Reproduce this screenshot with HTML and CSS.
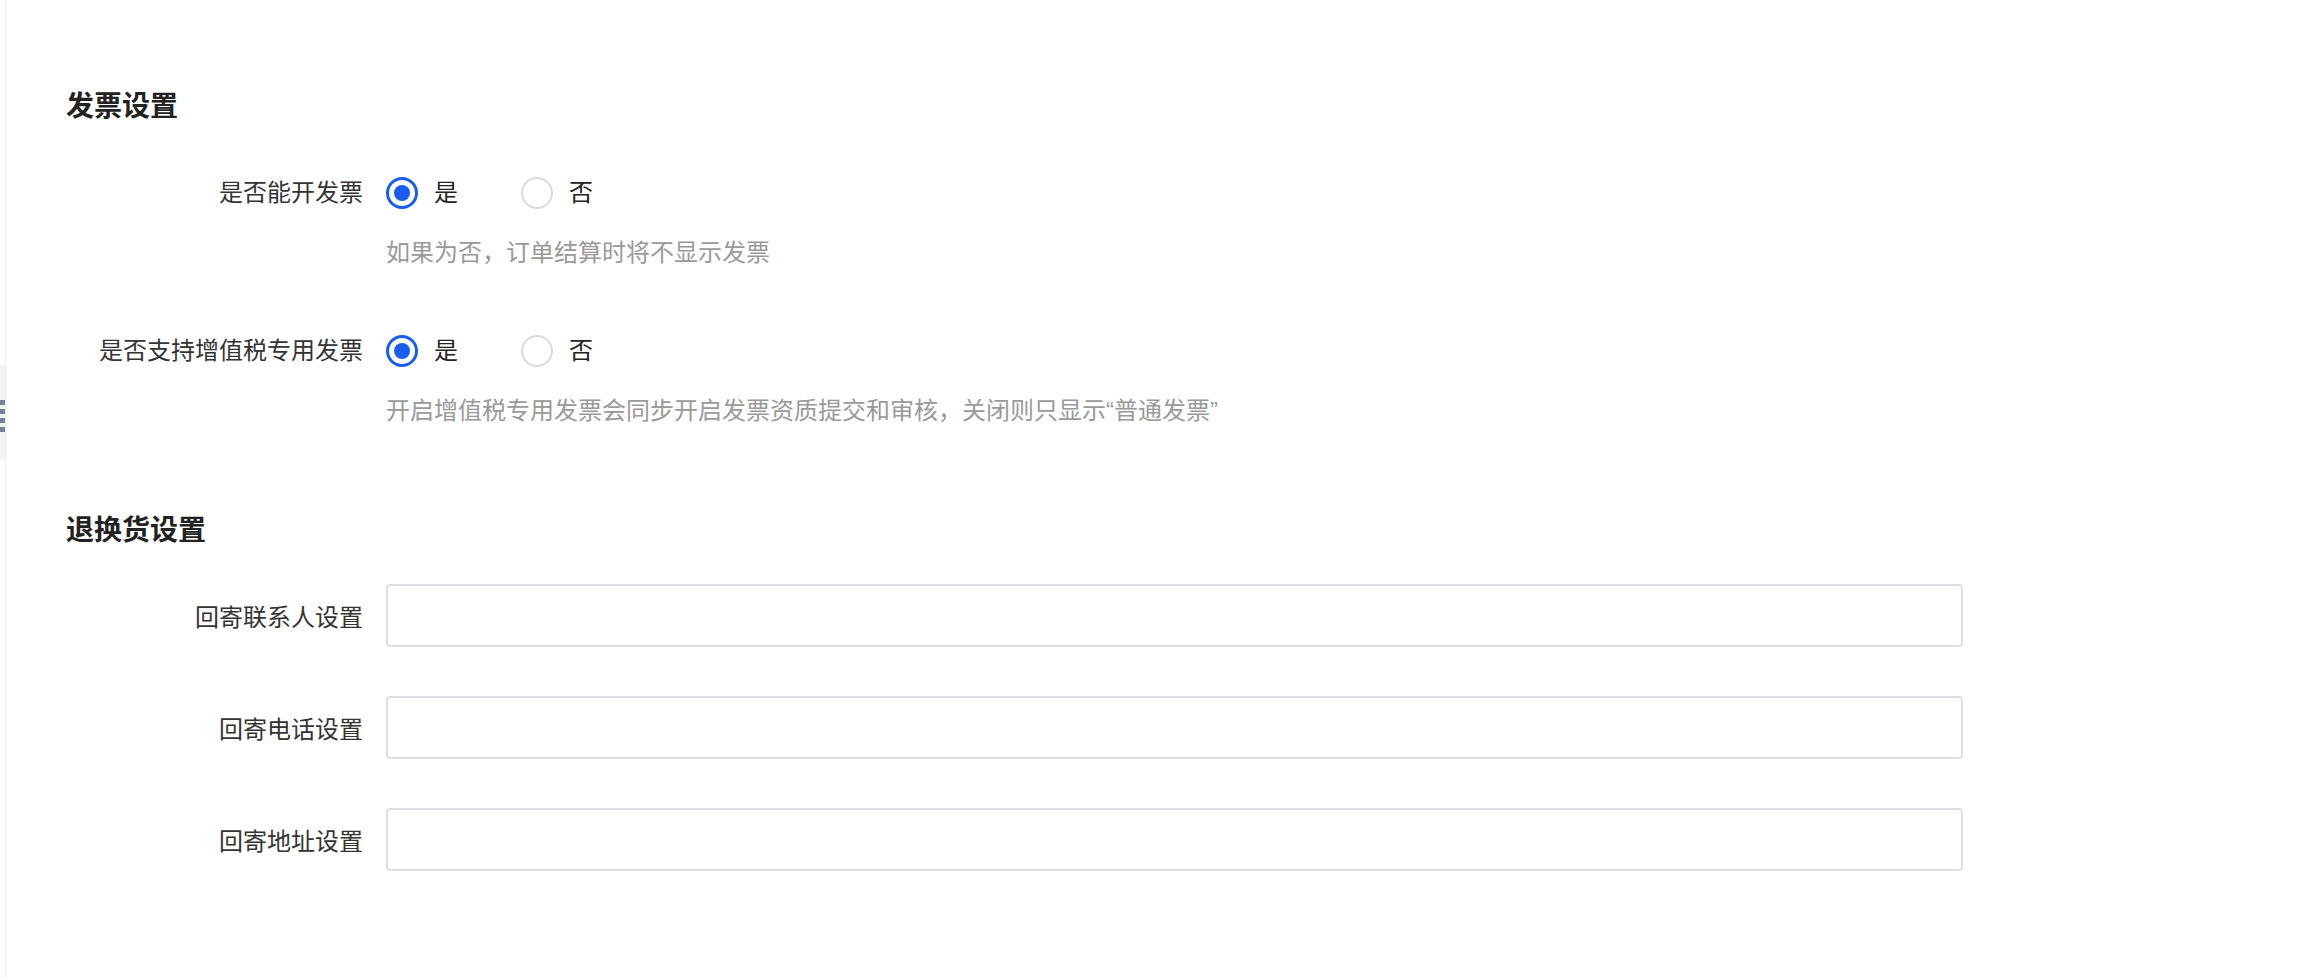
FILE: index.html
```html
<!DOCTYPE html>
<html lang="zh-CN">
<head>
<meta charset="utf-8">
<title>设置</title>
<link rel="stylesheet" href="styles.css">
</head>
<body>
<div class="page">
  <div class="edge">
    <div class="edge-spacer"></div>
    <div class="edge-tab">
      <span class="bar"></span><span class="bar"></span><span class="bar"></span><span class="bar"></span>
    </div>
  </div>
  <div class="content">
    <h2 class="section-title">发票设置</h2>

    <div class="form-row radio-row">
      <div class="label">是否能开发票</div>
      <div class="control">
        <label class="radio checked"><span class="dot"></span><span class="radio-text">是</span></label>
        <label class="radio"><span class="dot"></span><span class="radio-text">否</span></label>
      </div>
    </div>
    <div class="hint">如果为否，订单结算时将不显示发票</div>

    <div class="form-row radio-row row-second">
      <div class="label">是否支持增值税专用发票</div>
      <div class="control">
        <label class="radio checked"><span class="dot"></span><span class="radio-text">是</span></label>
        <label class="radio"><span class="dot"></span><span class="radio-text">否</span></label>
      </div>
    </div>
    <div class="hint">开启增值税专用发票会同步开启发票资质提交和审核，关闭则只显示“普通发票”</div>

    <h2 class="section-title section-second">退换货设置</h2>

    <div class="form-row input-row input-first">
      <div class="label">回寄联系人设置</div>
      <div class="control"><input class="text-input" type="text"></div>
    </div>
    <div class="form-row input-row">
      <div class="label">回寄电话设置</div>
      <div class="control"><input class="text-input" type="text"></div>
    </div>
    <div class="form-row input-row">
      <div class="label">回寄地址设置</div>
      <div class="control"><input class="text-input" type="text"></div>
    </div>
  </div>
</div>
</body>
</html>
```

FILE: styles.css
```css
* { box-sizing: border-box; }
html, body {
  margin: 0;
  padding: 0;
  background: #ffffff;
}
body {
  font-family: "Liberation Sans", "Noto Sans CJK SC", sans-serif;
  color: #333333;
}
.page {
  display: flex;
  min-height: 979px;
}
.edge {
  width: 6px;
  flex: none;
  display: flex;
  flex-direction: column;
  border-right: 1px solid #ededed;
}
.edge-spacer { height: 365px; }
.edge-tab {
  height: 95px;
  background: #f4f4f5;
  display: flex;
  flex-direction: column;
  justify-content: flex-start;
  padding-top: 35px;
  gap: 4px;
}
.edge-tab .bar {
  display: block;
  width: 5px;
  height: 5px;
  background: #76819a;
}
.content {
  flex: 1;
  padding: 87px 0 0 60px;
}
.section-title {
  margin: 0;
  font-size: 28px;
  line-height: 40px;
  height: 40px;
  font-weight: 700;
  color: #222222;
}
.section-second { margin-top: 84px; }
.form-row {
  display: flex;
  align-items: center;
}
.label {
  width: 297px;
  margin-right: 23px;
  text-align: right;
  font-size: 24px;
  line-height: 32px;
  color: #333333;
  white-space: nowrap;
}
.control {
  display: flex;
  align-items: center;
  flex: none;
}
.radio-row {
  height: 40px;
  margin-top: 46px;
}
.row-second { margin-top: 62px; }
.radio {
  display: flex;
  align-items: center;
  margin-right: 63px;
  cursor: pointer;
}
.dot {
  width: 32px;
  height: 32px;
  border-radius: 50%;
  border: 2px solid #d9d9d9;
  display: flex;
  align-items: center;
  justify-content: center;
  background: #ffffff;
}
.radio.checked .dot {
  border: 3px solid #1a5cf2;
}
.radio.checked .dot::after {
  content: "";
  width: 16px;
  height: 16px;
  border-radius: 50%;
  background: #1a5cf2;
}
.radio-text {
  margin-left: 16px;
  font-size: 24px;
  line-height: 32px;
  color: #222222;
}
.hint {
  margin-left: 320px;
  margin-top: 24px;
  font-size: 24px;
  line-height: 32px;
  color: #999999;
  white-space: nowrap;
}
.input-row {
  height: 63px;
  margin-top: 49px;
}
.input-row .label {
  padding-top: 4px;
}
.input-first { margin-top: 33px; }
.text-input {
  width: 1577px;
  height: 63px;
  border: 2px solid #dcdfe6;
  border-radius: 4px;
  background: #ffffff;
  outline: none;
  padding: 0 16px;
  font-size: 24px;
  font-family: inherit;
}
```
